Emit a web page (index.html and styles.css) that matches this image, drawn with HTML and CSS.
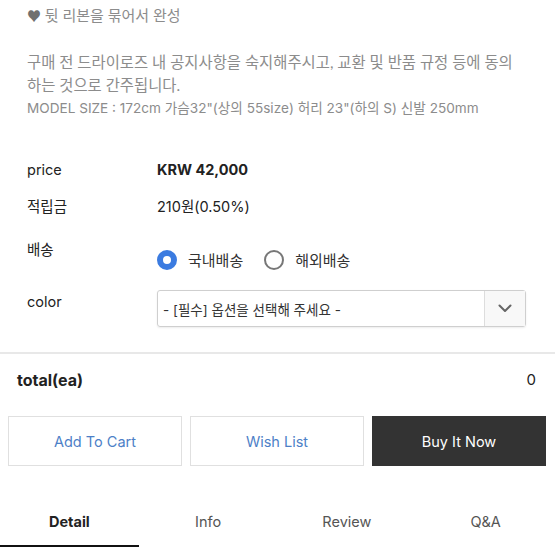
FILE: index.html
```html
<!DOCTYPE html>
<html lang="ko">
<head>
<meta charset="utf-8">
<link rel="stylesheet" href="styles.css">
</head>
<body>
<div class="page">
  <section class="desc">
    <p class="note"><span class="heart">♥</span> 뒷 리본을 묶어서 완성</p>
    <p class="para">구매 전 드라이로즈 내 공지사항을 숙지해주시고, 교환 및 반품 규정 등에 동의<br>하는 것으로 간주됩니다.</p>
    <p class="model">MODEL SIZE : 172cm 가슴32"(상의 55size) 허리 23"(하의 S) 신발 250mm</p>
  </section>

  <section class="info">
    <div class="row row-price">
      <div class="label">price</div>
      <div class="value strong">KRW 42,000</div>
    </div>
    <div class="row row-point">
      <div class="label">적립금</div>
      <div class="value">210원(0.50%)</div>
    </div>
    <div class="row row-ship">
      <div class="label">배송</div>
      <div class="value radios">
        <label class="radio"><span class="dot on"></span>국내배송</label>
        <label class="radio"><span class="dot"></span>해외배송</label>
      </div>
    </div>
    <div class="row row-color">
      <div class="label">color</div>
      <div class="select">
        <span class="select-text">- [필수] 옵션을 선택해 주세요 -</span>
        <span class="select-arrow">
          <svg width="14" height="9" viewBox="0 0 14 9"><path d="M1.5 1.5 L7 7 L12.5 1.5" fill="none" stroke="#666" stroke-width="2" stroke-linecap="round" stroke-linejoin="round"/></svg>
        </span>
      </div>
    </div>
  </section>

  <section class="total">
    <span class="total-label">total(ea)</span>
    <span class="total-value">0</span>
  </section>

  <section class="actions">
    <button class="btn btn-light">Add To Cart</button>
    <button class="btn btn-light">Wish List</button>
    <button class="btn btn-dark">Buy It Now</button>
  </section>

  <nav class="tabs">
    <a class="tab active">Detail</a>
    <a class="tab">Info</a>
    <a class="tab">Review</a>
    <a class="tab">Q&amp;A</a>
  </nav>
</div>
</body>
</html>
```

FILE: styles.css
```css
* { box-sizing: border-box; }
html, body { margin: 0; padding: 0; background: #fff; }
body {
  font-family: "Inter", "Noto Sans CJK KR", sans-serif;
  color: #222;
  width: 555px;
  overflow: hidden;
}
.page { width: 555px; }

.desc { padding: 4px 0 0 27px; font-family: "Lato", "Noto Sans CJK KR", sans-serif; }
.desc p { margin: 0; font-size: 15.4px; line-height: 23px; color: #8c8c8c; white-space: nowrap; }
.desc p.model { font-family: "Inter", "Noto Sans CJK KR", sans-serif; font-size: 13.6px; }
.desc p.note { margin-bottom: 24px; font-size: 15px; }
.heart { color: #707070; font-size: 14px; }

.info { padding: 31px 0 0 27px; }
.row { display: grid; grid-template-columns: 130px 1fr; align-items: center; }
.label { font-size: 14.5px; color: #222; }
.value { font-size: 14.5px; color: #222; }
.strong { font-weight: 700; }
.row-price, .row-point { height: 36px; }
.row-ship { align-items: start; height: 57px; }
.row-ship .label { margin-top: 18px; line-height: 18px; }
.radios { display: flex; align-items: center; margin-top: 26px; gap: 0; }
.radio { display: flex; align-items: center; font-size: 15px; color: #333; margin-right: 21px; }
.dot {
  width: 20px; height: 20px; border-radius: 50%;
  border: 2px solid #777; margin-right: 11px; background: #fff;
}
.dot.on { border: 6px solid #3b7be0; }

.row-color { align-items: start; margin-top: 10px; }
.row-color .label { margin-top: 2px; line-height: 20px; }
.select {
  width: 369px; height: 37px;
  border: 1px solid #cfcfcf; border-radius: 3px;
  box-shadow: 0 1px 2px rgba(0,0,0,0.08);
  display: flex; align-items: center;
}
.select-text { flex: 1; padding-left: 5px; font-size: 13.5px; color: #333; }
.select-arrow {
  width: 41px; height: 100%;
  border-left: 1px solid #ddd;
  background: #f8f8f8;
  display: flex; align-items: center; justify-content: center;
}

.total {
  margin-top: 25px;
  border-top: 2px solid #e8e8e8;
  display: flex; justify-content: space-between; align-items: center;
  height: 53px;
  padding: 0 19px 0 17px;
}
.total-label { font-size: 16px; font-weight: 700; color: #222; }
.total-value { font-size: 15px; color: #222; }

.actions {
  display: grid; grid-template-columns: repeat(3, 1fr); gap: 8px;
  padding: 11px 9px 0 8px;
}
.btn {
  height: 50px; font-family: inherit; font-size: 14.5px;
  border: 1px solid #e0e0e0; background: #fff; color: #4d7fc7; padding: 0;
}
.btn-dark { background: #333; border-color: #333; color: #fff; }

.tabs {
  display: grid; grid-template-columns: repeat(4, 1fr);
  margin-top: 42px;
}
.tab {
  text-align: center; font-size: 14.5px; color: #555;
  height: 39px; line-height: 28px;
}
.tab.active { font-weight: 700; color: #222; border-bottom: 2px solid #111; }
```
